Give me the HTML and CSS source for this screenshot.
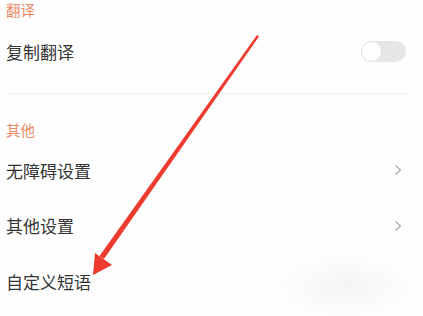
FILE: index.html
```html
<!DOCTYPE html>
<html lang="zh-CN">
<head>
  <meta charset="UTF-8">
  <title>设置</title>
  <link rel="stylesheet" href="styles.css">
</head>
<body>
  <div class="settings">
    <div class="group-title first">翻译</div>
    <div class="row">
      <span class="label">复制翻译</span>
      <span class="switch"><span class="knob"></span></span>
    </div>
    <div class="divider"></div>

    <div class="group-title">其他</div>
    <div class="row">
      <span class="label">无障碍设置</span>
      <svg class="chevron" viewBox="0 0 8 12"><path d="M1.5 1.5 L6.5 6 L1.5 10.5" /></svg>
    </div>
    <div class="row">
      <span class="label">其他设置</span>
      <svg class="chevron" viewBox="0 0 8 12"><path d="M1.5 1.5 L6.5 6 L1.5 10.5" /></svg>
    </div>
    <div class="row">
      <span class="label">自定义短语</span>
    </div>
  </div>

  <div class="smudge"></div>

  <svg class="arrow" viewBox="0 0 423 316">
    <polygon points="257,35 259,36.5 104,259 99.5,256" />
    <polygon points="93,275 95,253 112,265" />
  </svg>
</body>
</html>
```

FILE: styles.css
```css
* { margin: 0; padding: 0; box-sizing: border-box; }

html, body {
  width: 423px;
  height: 316px;
  overflow: hidden;
  background: #fefefe;
  font-family: "Noto Sans CJK SC", "Noto Sans", sans-serif;
  color: #333;
}

body { position: relative; }

.settings {
  display: flex;
  flex-direction: column;
  padding: 0 18px 0 6px;
}

.group-title {
  height: 20px;
  line-height: 20px;
  font-size: 14.5px;
  color: #e98c66;
  margin-top: 26px;
  margin-bottom: 2.5px;
}

.group-title.first {
  margin-top: 0;
  margin-bottom: 4px;
}

.row {
  height: 55.5px;
  display: flex;
  align-items: center;
  justify-content: space-between;
}

.label {
  font-size: 17px;
  color: #353535;
}

.switch {
  width: 45px;
  height: 21px;
  border-radius: 11px;
  background: #e6e6e6;
  display: flex;
  align-items: center;
  margin-right: -1px;
}

.knob {
  width: 21px;
  height: 21px;
  border-radius: 50%;
  background: #fff;
  border: 1px solid #e3e3e3;
}

.divider {
  height: 1px;
  background: #f1f1f1;
  margin: 13.5px -6px 0 0;
}

.chevron {
  width: 8px;
  height: 12px;
  margin-right: 3px;
  fill: none;
  stroke: #a8a8a8;
  stroke-width: 1.2;
}

.smudge {
  position: absolute;
  left: 270px;
  top: 252px;
  width: 150px;
  height: 70px;
  border-radius: 50%;
  background: radial-gradient(ellipse at center, rgba(0,0,0,0.04), rgba(0,0,0,0) 70%);
}

.arrow {
  position: absolute;
  left: 0;
  top: 0;
  width: 423px;
  height: 316px;
  fill: #ee3b2f;
}
```
